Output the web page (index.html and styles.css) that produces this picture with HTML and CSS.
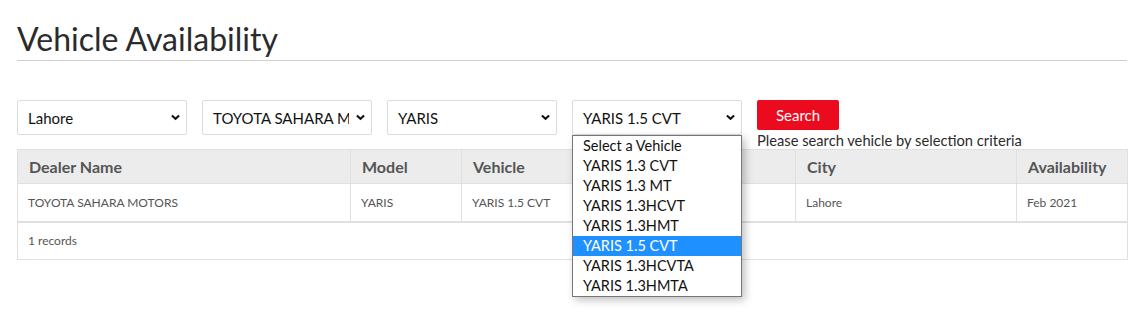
FILE: index.html
```html
<!DOCTYPE html>
<html lang="en">

<head>
    <meta charset="UTF-8">
    <meta name="viewport" content="width=device-width, initial-scale=1.0">
    <title>Vehicle Availability</title>
    <link rel="stylesheet" href="styles.css">
</head>

<body>
    <div id="page">
        <h1 class="title">Vehicle Availability</h1>

        <div class="filters">
            <div class="select-box">
                <select name="city">
                    <option>Lahore</option>
                </select>
                <svg class="chevron" viewBox="0 0 10 7"><path d="M1 1.2 L5 5 L9 1.2" /></svg>
            </div>
            <div class="select-box">
                <select name="dealer">
                    <option>TOYOTA SAHARA MOTORS</option>
                </select>
                <svg class="chevron" viewBox="0 0 10 7"><path d="M1 1.2 L5 5 L9 1.2" /></svg>
            </div>
            <div class="select-box">
                <select name="model">
                    <option>YARIS</option>
                </select>
                <svg class="chevron" viewBox="0 0 10 7"><path d="M1 1.2 L5 5 L9 1.2" /></svg>
            </div>
            <div class="select-box">
                <select name="vehicle">
                    <option>YARIS 1.5 CVT</option>
                </select>
                <svg class="chevron" viewBox="0 0 10 7"><path d="M1 1.2 L5 5 L9 1.2" /></svg>

                <ul class="dropdown">
                    <li>Select a Vehicle</li>
                    <li>YARIS 1.3 CVT</li>
                    <li>YARIS 1.3 MT</li>
                    <li>YARIS 1.3HCVT</li>
                    <li>YARIS 1.3HMT</li>
                    <li class="active">YARIS 1.5 CVT</li>
                    <li>YARIS 1.3HCVTA</li>
                    <li>YARIS 1.3HMTA</li>
                </ul>
            </div>
            <div class="search-box">
                <button id="search-btn">Search</button>
                <p class="hint">Please search vehicle by selection criteria</p>
            </div>
        </div>

        <table class="results">
            <colgroup>
                <col class="c-dealer">
                <col class="c-model">
                <col class="c-vehicle">
                <col class="c-color">
                <col class="c-city">
                <col class="c-avail">
            </colgroup>
            <thead>
                <tr>
                    <th>Dealer Name</th>
                    <th>Model</th>
                    <th>Vehicle</th>
                    <th></th>
                    <th>City</th>
                    <th>Availability</th>
                </tr>
            </thead>
            <tbody>
                <tr>
                    <td>TOYOTA SAHARA MOTORS</td>
                    <td>YARIS</td>
                    <td>YARIS 1.5 CVT</td>
                    <td></td>
                    <td>Lahore</td>
                    <td>Feb 2021</td>
                </tr>
            </tbody>
            <tfoot>
                <tr>
                    <td colspan="6">1 records</td>
                </tr>
            </tfoot>
        </table>
    </div>
</body>

</html>
```

FILE: styles.css
```css
* {
    margin: 0;
    padding: 0;
    box-sizing: border-box;
    list-style: none;
    outline: none;
}

body {
    width: 100vw;
    height: 100vh;
    background-color: white;
    font-family: Lato, "Noto Sans", sans-serif;
    color: #222;
    overflow: hidden;
}

#page {
    padding: 20px 19px 0 17px;
}

.title {
    font-size: 32px;
    font-weight: 400;
    color: #2b2b2b;
    line-height: 38px;
    padding-bottom: 2px;
    border-bottom: 1px solid #cfcfcf;
}

.filters {
    display: flex;
    gap: 15px;
    margin-top: 39px;
}

.select-box {
    position: relative;
    width: 170px;
    height: 35px;
}

.select-box select {
    appearance: none;
    -webkit-appearance: none;
    width: 100%;
    height: 100%;
    border: 1px solid #dcdcdc;
    border-radius: 2px;
    background-color: white;
    padding: 0 22px 0 10px;
    font-family: inherit;
    font-size: 15px;
    color: #111;
}

.chevron {
    position: absolute;
    right: 7px;
    top: 14px;
    width: 9px;
    height: 7px;
    fill: none;
    stroke: #111;
    stroke-width: 2.3;
}

.dropdown {
    position: absolute;
    top: 35px;
    left: 0;
    width: 170px;
    border: 1px solid #777;
    background-color: white;
    box-shadow: 3px 3px 8px rgba(0, 0, 0, 0.25);
    z-index: 2;
}

.dropdown li {
    height: 20px;
    line-height: 20px;
    padding-left: 10px;
    font-size: 14.5px;
    color: #111;
}

.dropdown li.active {
    background-color: #1e90ff;
    color: white;
}

.search-box {
    display: flex;
    flex-direction: column;
    align-items: flex-start;
}

#search-btn {
    width: 82px;
    height: 30px;
    background-color: #eb0a1e;
    color: white;
    border: none;
    border-radius: 2px;
    font-family: inherit;
    font-size: 15px;
    cursor: pointer;
}

.hint {
    font-size: 14.7px;
    line-height: 20px;
    color: #2b2b2b;
}

.results {
    width: 1110px;
    margin-top: -1px;
    border-collapse: collapse;
    border: 1px solid #e0e0e0;
    table-layout: fixed;
}

.c-dealer { width: 333px; }
.c-model { width: 111px; }
.c-vehicle { width: 189px; }
.c-color { width: 145px; }
.c-city { width: 221px; }
.c-avail { width: 111px; }

.results th {
    height: 34px;
    background-color: #ececec;
    border: 1px solid #e0e0e0;
    text-align: left;
    padding-left: 11px;
    font-size: 16px;
    font-weight: 700;
    color: #555;
}

.results tbody td {
    height: 38px;
    border-left: 1px solid #e0e0e0;
    border-bottom: 2px solid #e0e0e0;
    padding-left: 10px;
    font-size: 12px;
    color: #555;
}

.results tfoot td {
    height: 38px;
    padding-left: 10px;
    font-size: 12px;
    color: #555;
}
```
